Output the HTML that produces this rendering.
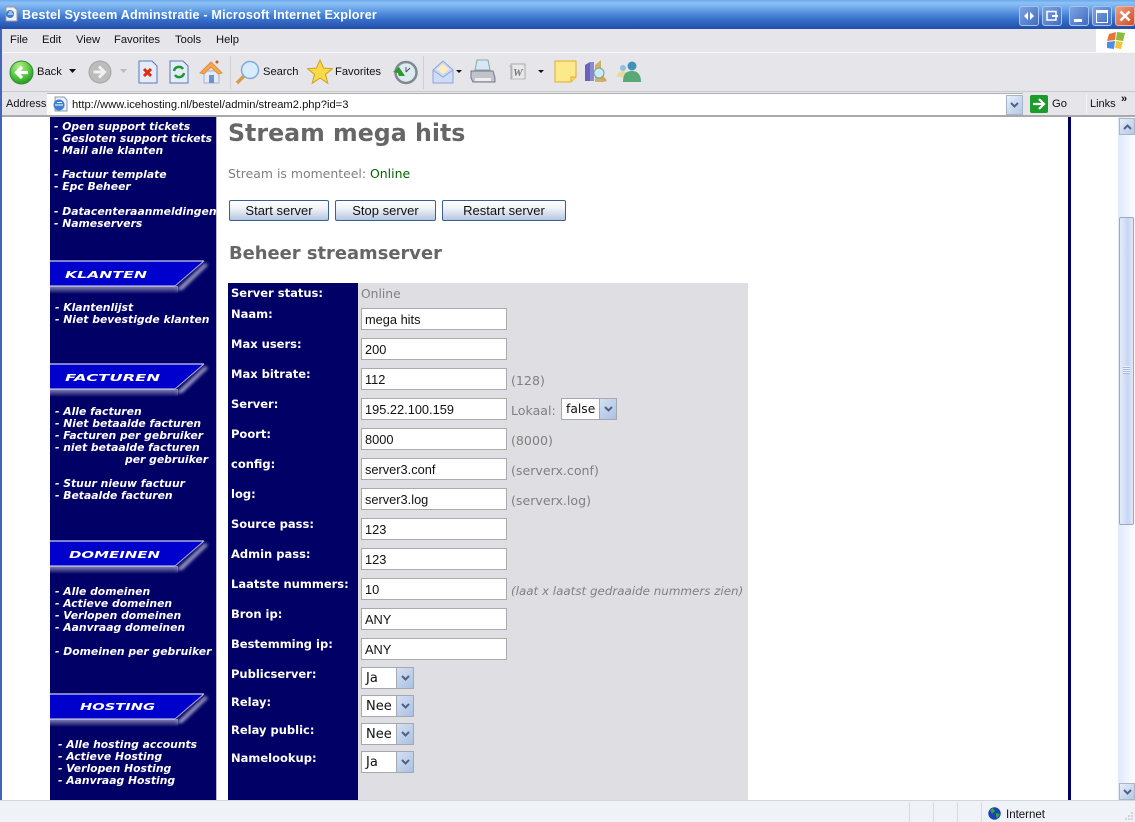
<!DOCTYPE html>
<html><head><meta charset="utf-8"><style>
html,body{margin:0;padding:0}
body{width:1135px;height:822px;position:relative;overflow:hidden;background:#fff;font-family:"Liberation Sans",sans-serif;color:#000}
div,span,svg{position:absolute;white-space:nowrap}
.t{font:11.2px/14px "Liberation Sans",sans-serif;color:#111}
.m{font:italic bold 10.8px/12px "DejaVu Sans",sans-serif;color:#fff;left:54px;margin-top:1px}
.bn{left:50px;width:167px;height:42px}
.l{font:bold 11.5px/14px "DejaVu Sans",sans-serif;color:#fff;left:231px;margin-top:-1px}
.i{left:361px;width:144px;height:20px;background:#fff;border:1px solid #aaa;font:12.8px/22px "Liberation Sans",sans-serif;color:#111;text-indent:3px}
.s{left:361px;height:20px;background:#fff;border:1px solid #a4a8b0;font:13px/22px "DejaVu Sans",sans-serif;color:#111}
.ar{top:0;right:0;width:16px;height:20px;background:linear-gradient(135deg,#d4e0f2,#aac0e2);border-left:1px solid #a4a8b0}
.h{font:12.6px/14px "DejaVu Sans",sans-serif;color:#808080}
.b{top:200px;height:19px;border:1px solid #3a5f95;border-radius:2px;background:linear-gradient(#fff,#eef2f8 40%,#b6c6df);font:13px/19px "Liberation Sans",sans-serif;color:#111;text-align:center}
.bt{font-family:"DejaVu Sans";font-weight:bold;font-style:italic;font-size:10px;fill:#fff}
.cap{top:6px;width:18px;height:18px;background:linear-gradient(135deg,#7da4e2,#3f6cc0);border:1px solid #a8c4ee;border-radius:3px}
</style></head><body>
<div style="left:0;top:0;width:1135px;height:29px;background:linear-gradient(#6aa8ee 0,#8dc2f4 3px,#6aa4e8 9px,#3a75d0 18px,#2350ac 28px)"></div>
<div style="left:22px;top:8px;font:bold 12.6px/15px 'Liberation Sans',sans-serif;color:#fff;letter-spacing:.17px">Bestel Systeem Adminstratie - Microsoft Internet Explorer</div>
<svg style="left:3px;top:6px" width="16" height="16" viewBox="0 0 16 16"><path d="M3 1h8l3 3v11H3z" fill="#f4f4f4" stroke="#999"/><circle cx="7" cy="8" r="4" fill="#3a7fd0"/><path d="M5 8h5M6 6h3" stroke="#fff"/></svg>
<div style="left:0;top:29px;width:1135px;height:23px;background:#e6e5ea;border-bottom:1px solid #f8f8f8"></div>
<div class="t" style="left:10px;top:33px">File</div><div class="t" style="left:42px;top:33px">Edit</div><div class="t" style="left:76px;top:33px">View</div><div class="t" style="left:114px;top:33px">Favorites</div><div class="t" style="left:175px;top:33px">Tools</div><div class="t" style="left:216px;top:33px">Help</div>
<div style="left:1096px;top:29px;width:39px;height:23px;background:#fff"></div>
<svg style="left:1102px;top:31px" width="28" height="20" viewBox="0 0 28 20"><path d="M7 3l7-2-1 8-8 1z" fill="#e8743a"/><path d="M15 1l8 1-2 8-7-1z" fill="#8dbb3a"/><path d="M5 11l8-1-1 8-7-1z" fill="#4a8fe0"/><path d="M14 10l7 1-2 7-6-1z" fill="#f3c53a"/></svg>
<div style="left:0;top:53px;width:1135px;height:38px;background:#e6e5ea;border-bottom:1px solid #c9c9cc"></div>
<!-- back -->
<svg style="left:9px;top:60px" width="25" height="25" viewBox="0 0 25 25"><defs><radialGradient id="g" cx=".4" cy=".25" r=".85"><stop offset="0" stop-color="#b8f08a"/><stop offset=".6" stop-color="#4cc03a"/><stop offset="1" stop-color="#1b8a1b"/></radialGradient></defs><circle cx="12.5" cy="12.5" r="11.5" fill="url(#g)" stroke="#2f8f2f"/><path d="M19 12.5H8M13 7l-5.500 5.500 5.500 5.500" fill="none" stroke="#fff" stroke-width="3.200"/></svg>
<div class="t" style="left:37px;top:65px">Back</div>
<svg style="left:69px;top:69px" width="8" height="5"><path d="M0 0h7L3.500 4z" fill="#111"/></svg>
<svg style="left:88px;top:60px" width="24" height="24" viewBox="0 0 24 24"><circle cx="12" cy="12" r="11" fill="#bcbcbc" stroke="#a4a4a4"/><path d="M5.500 12h10.500M11 6.500l5.500 5.500-5.500 5.500" fill="none" stroke="#f0f0f0" stroke-width="3"/></svg>
<svg style="left:120px;top:69px" width="8" height="5"><path d="M0 0h7L3.500 4z" fill="#bbb"/></svg>
<svg style="left:138px;top:60px" width="20" height="24" viewBox="0 0 20 24"><path d="M1 1h13l5 5v17H1z" fill="#e4ecfa" stroke="#5a78b8"/><path d="M6 9l7 7M13 9l-7 7" stroke="#e02a10" stroke-width="3"/></svg>
<svg style="left:169px;top:60px" width="20" height="24" viewBox="0 0 20 24"><path d="M1 1h13l5 5v17H1z" fill="#e4ecfa" stroke="#5a78b8"/><path d="M5 11a5 5 0 0 1 9-2M15 13a5 5 0 0 1-9 2" fill="none" stroke="#1c9a30" stroke-width="2.500"/></svg>
<svg style="left:199px;top:59px" width="25" height="26" viewBox="0 0 25 26"><path d="M5 12v12h15V12z" fill="#e4eaf8" stroke="#a8b4cc"/><path d="M1 14L12 3l11 11-4 1-7-7-7 7z" fill="#f4a650" stroke="#e09040"/><rect x="10" y="16" width="5" height="8" fill="#6a94d0"/><circle cx="18" cy="3" r="1.500" fill="#d05030"/></svg>
<div style="left:230px;top:56px;width:1px;height:33px;background:#cfcfd4"></div>
<svg style="left:235px;top:60px" width="26" height="25" viewBox="0 0 26 25"><path d="M2 23l8-8" stroke="#d99a4a" stroke-width="3.500"/><circle cx="15" cy="10" r="8.500" fill="#d8ecfb" stroke="#7faad6" stroke-width="1.500"/></svg>
<div class="t" style="left:263px;top:65px">Search</div>
<svg style="left:307px;top:59px" width="26" height="26" viewBox="0 0 26 26"><path d="M13 1l3.500 8 9 .7-7 5.600 2.300 9L13 19l-7.800 5.300 2.300-9-7-5.600 9-.7z" fill="#fbd94a" stroke="#c9a520"/></svg>
<div class="t" style="left:335px;top:65px">Favorites</div>
<svg style="left:392px;top:60px" width="26" height="25" viewBox="0 0 26 25"><circle cx="14" cy="12.500" r="10.500" fill="#dfeaf0" stroke="#7f8a90" stroke-width="2.500"/><path d="M14 12l4-4M14 12v-5" stroke="#456"/><path d="M1 12l6-5 6 9H7a8 8 0 0 1-1-3z" fill="#2b9a2b"/></svg>
<div style="left:423px;top:56px;width:1px;height:33px;background:#cfcfd4"></div>
<svg style="left:432px;top:60px" width="24" height="24" viewBox="0 0 24 24"><path d="M1 10L11 1l10 9v13H1z" fill="#cfdcf6" stroke="#8ea4d8"/><path d="M5 9l6-5 6 5-6 5z" fill="#fdeebc"/><path d="M1 10l10 7 10-7" fill="none" stroke="#8ea4d8"/></svg>
<svg style="left:456px;top:70px" width="7" height="4"><path d="M0 0h6L3 3z" fill="#111"/></svg>
<svg style="left:470px;top:59px" width="26" height="26" viewBox="0 0 26 26"><path d="M7 1h11l2 10H5z" fill="#d9e6f5" stroke="#8aa"/><path d="M1 12h22l2 7v4H3l-2-4z" fill="#c0c3ca" stroke="#778"/><path d="M5 19h16v3H5z" fill="#eee"/></svg>
<svg style="left:508px;top:63px" width="18" height="18" viewBox="0 0 18 18"><path d="M3 1h14v15H3z" fill="#e8e8e8" stroke="#aaa"/><path d="M1 3h3v13h13" fill="none" stroke="#bbb"/><text x="5" y="13" font-family="Liberation Serif" font-style="italic" font-weight="bold" font-size="11" fill="#777">W</text></svg>
<svg style="left:538px;top:70px" width="7" height="4"><path d="M0 0h6L3 3z" fill="#111"/></svg>
<svg style="left:554px;top:60px" width="23" height="23" viewBox="0 0 23 23"><path d="M1 1h21v16l-5 5H1z" fill="#fde98a" stroke="#e0ae2a"/><path d="M17 22v-5h5" fill="#f8d860" stroke="#e0ae2a"/></svg>
<svg style="left:584px;top:59px" width="24" height="25" viewBox="0 0 24 25"><path d="M1 6l5-3v19H1z" fill="#6a62b8"/><path d="M6 3h4v19H6z" fill="#8d86d0"/><path d="M11 6l6-5v10h3v12H11z" fill="#cdb06a"/><circle cx="15" cy="14" r="5" fill="#cfe7fa" stroke="#6a8"/><path d="M18 18l4 4" stroke="#d9a04a" stroke-width="2.500"/></svg>
<svg style="left:616px;top:60px" width="26" height="23" viewBox="0 0 26 23"><circle cx="7" cy="8" r="3" fill="#8fbfe4"/><path d="M1 17c0-4 3-6 6-6s4 2 4 6z" fill="#e4dc98"/><circle cx="16" cy="6" r="4.500" fill="#3f93b8"/><path d="M7 22c0-8 3-11 9-11s9 4 9 11z" fill="#5aa878"/></svg>
<!-- address -->
<div style="left:0;top:92px;width:1135px;height:23px;background:#e6e5ea"></div>
<div class="t" style="left:6px;top:97px;font-size:11px">Address</div>
<div style="left:47px;top:93px;width:976px;height:21px;background:#fff;border-top:1px solid #b0b0b4"></div>
<svg style="left:52px;top:96px" width="16" height="16" viewBox="0 0 16 16"><path d="M3 1h9l3 3v11H3z" fill="#eef" stroke="#89a"/><circle cx="7" cy="9" r="5.500" fill="#3a7fd0"/><path d="M3 9h8M5 6.500h5" stroke="#fff"/></svg>
<div class="t" style="left:72px;top:98px">http://www.icehosting.nl/bestel/admin/stream2.php?id=3</div>
<div style="left:1006px;top:95px;width:15px;height:18px;background:linear-gradient(135deg,#e6eefa,#b4c8e6);border:1px solid #a8b4c8"><svg style="left:3px;top:6px" width="9" height="6"><path d="M1 1l3.500 3.500L8 1" fill="none" stroke="#4d6185" stroke-width="2"/></svg></div>
<div style="left:1030px;top:95px;width:18px;height:18px;background:#1c9a2a;border-radius:2px"><svg style="left:2px;top:3px" width="14" height="12"><path d="M1 6h10M7 1l5 5-5 5" fill="none" stroke="#fff" stroke-width="2.200"/></svg></div>
<div class="t" style="left:1052px;top:97px">Go</div>
<div style="left:1086px;top:94px;width:1px;height:20px;background:#f5f5f5"></div>
<div class="t" style="left:1090px;top:97px;font-size:11px">Links</div>
<div style="left:1121px;top:93px;font:bold 11px/13px 'Liberation Sans',sans-serif;color:#111">»</div>
<div style="left:0;top:115px;width:1135px;height:2px;background:#a9a9ad"></div>
<!-- window borders -->
<div style="left:0;top:29px;width:2px;height:793px;background:#3f66bc"></div>
<!-- caption buttons -->
<div class="cap" style="left:1019px"><svg style="left:3px;top:4px" width="12" height="10"><path d="M5 1L1 5l4 4zM7 1l4 4-4 4z" fill="#fff"/></svg></div>
<div class="cap" style="left:1042px"><svg style="left:3px;top:3px" width="13" height="12"><path d="M1 1.500h9V10H1z" fill="none" stroke="#fff" stroke-width="1.500"/><path d="M6 6h6" stroke="#fff" stroke-width="2"/></svg></div>
<div class="cap" style="left:1069px"><div style="left:4px;top:12px;width:8px;height:3px;background:#fff"></div></div>
<div class="cap" style="left:1092px"><div style="left:3px;top:3px;width:10px;height:9px;border:1px solid #fff;border-top:3px solid #fff"></div></div>
<div class="cap" style="left:1115px;background:linear-gradient(135deg,#f0a080,#cf4a28);border-color:#e8b8a8"><svg style="left:3px;top:3px" width="12" height="12"><path d="M1.500 1.500l9 9M10.500 1.500l-9 9" stroke="#fff" stroke-width="2.600"/></svg></div>
<!-- page -->
<div style="left:50px;top:117px;width:166px;height:683px;background:#000066;border-right:1px solid #b8b8d0"></div>
<div style="left:1068px;top:117px;width:3px;height:683px;background:#000066"></div>
<div class="m" style="top:120px">- Open support tickets</div>
<div class="m" style="top:132px">- Gesloten support tickets</div>
<div class="m" style="top:144px">- Mail alle klanten</div>
<div class="m" style="top:168px">- Factuur template</div>
<div class="m" style="top:180px">- Epc Beheer</div>
<div class="m" style="top:205px">- Datacenteraanmeldingen</div>
<div class="m" style="top:217px">- Nameservers</div>
<div class="m" style="top:301px;left:55px">- Klantenlijst</div>
<div class="m" style="top:313px;left:55px">- Niet bevestigde klanten</div>
<div class="m" style="top:405px;left:55px">- Alle facturen</div>
<div class="m" style="top:417px;left:55px">- Niet betaalde facturen</div>
<div class="m" style="top:429px;left:55px">- Facturen per gebruiker</div>
<div class="m" style="top:441px;left:55px">- niet betaalde facturen</div>
<div class="m" style="top:453px;left:125px">per gebruiker</div>
<div class="m" style="top:477px;left:55px">- Stuur nieuw factuur</div>
<div class="m" style="top:489px;left:55px">- Betaalde facturen</div>
<div class="m" style="top:585px;left:55px">- Alle domeinen</div>
<div class="m" style="top:597px;left:55px">- Actieve domeinen</div>
<div class="m" style="top:609px;left:55px">- Verlopen domeinen</div>
<div class="m" style="top:621px;left:55px">- Aanvraag domeinen</div>
<div class="m" style="top:645px;left:55px">- Domeinen per gebruiker</div>
<div class="m" style="top:738px;left:58px">- Alle hosting accounts</div>
<div class="m" style="top:750px;left:58px">- Actieve Hosting</div>
<div class="m" style="top:762px;left:58px">- Verlopen Hosting</div>
<div class="m" style="top:774px;left:58px">- Aanvraag Hosting</div>
<!-- banners -->
<svg width="0" height="0" style="left:0;top:0"><defs><linearGradient id="sh" x1="0" y1="0" x2="0" y2="1"><stop offset="0" stop-color="#8a8ab4"/><stop offset="1" stop-color="#000066"/></linearGradient><filter id="bl" x="-30%" y="-30%" width="160%" height="160%"><feGaussianBlur stdDeviation="1.500"/></filter></defs></svg>
<svg class="bn" style="top:260px" viewBox="0 0 167 42"><path d="M0 26h128v8H0z" fill="url(#sh)"/><path d="M126 30L155 3l3 2-26 25z" fill="#a4a4c8" filter="url(#bl)"/><path d="M0 1h154l-29 25H0z" fill="#0000cc"/><path d="M0 1h154" stroke="#fff"/><path d="M0 26h125" stroke="#e8e8f4"/><path d="M125 26l29-25" stroke="#b0b0d4"/><text class="bt" x="15" y="18" textLength="82" lengthAdjust="spacingAndGlyphs">KLANTEN</text></svg>
<svg class="bn" style="top:363px" viewBox="0 0 167 42"><path d="M0 26h128v8H0z" fill="url(#sh)"/><path d="M126 30L155 3l3 2-26 25z" fill="#a4a4c8" filter="url(#bl)"/><path d="M0 1h154l-29 25H0z" fill="#0000cc"/><path d="M0 1h154" stroke="#fff"/><path d="M0 26h125" stroke="#e8e8f4"/><path d="M125 26l29-25" stroke="#b0b0d4"/><text class="bt" x="15" y="18" textLength="95" lengthAdjust="spacingAndGlyphs">FACTUREN</text></svg>
<svg class="bn" style="top:540px" viewBox="0 0 167 42"><path d="M0 26h128v8H0z" fill="url(#sh)"/><path d="M126 30L155 3l3 2-26 25z" fill="#a4a4c8" filter="url(#bl)"/><path d="M0 1h154l-29 25H0z" fill="#0000cc"/><path d="M0 1h154" stroke="#fff"/><path d="M0 26h125" stroke="#e8e8f4"/><path d="M125 26l29-25" stroke="#b0b0d4"/><text class="bt" x="19" y="18" textLength="91" lengthAdjust="spacingAndGlyphs">DOMEINEN</text></svg>
<svg class="bn" style="top:693px" viewBox="0 0 167 42"><path d="M0 26h128v8H0z" fill="url(#sh)"/><path d="M126 30L155 3l3 2-26 25z" fill="#a4a4c8" filter="url(#bl)"/><path d="M0 1h154l-29 25H0z" fill="#0000cc"/><path d="M0 1h154" stroke="#fff"/><path d="M0 26h125" stroke="#e8e8f4"/><path d="M125 26l29-25" stroke="#b0b0d4"/><text class="bt" x="30" y="17" textLength="75" lengthAdjust="spacingAndGlyphs">HOSTING</text></svg>
<!-- content -->
<div style="left:228px;top:117px;font:bold 23.7px/32px 'DejaVu Sans',sans-serif;color:#666">Stream mega hits</div>
<div style="left:228px;top:166px;font:12.45px/15px 'DejaVu Sans',sans-serif;color:#808080">Stream is momenteel: <span style="position:static;color:#006400">Online</span></div>
<div class="b" style="left:229px;width:98px">Start server</div>
<div class="b" style="left:335px;width:99px">Stop server</div>
<div class="b" style="left:442px;width:122px">Restart server</div>
<div style="left:229px;top:243px;font:bold 17.9px/21px 'DejaVu Sans',sans-serif;color:#666">Beheer streamserver</div>
<div style="left:228px;top:283px;width:130px;height:517px;background:#000066"></div>
<div style="left:358px;top:283px;width:390px;height:517px;background:#dfdfe3"></div>
<div class="l" style="top:287px">Server status:</div>
<div class="h" style="left:361px;top:287px;font-size:12.3px">Online</div>
<div class="l" style="top:308px">Naam:</div><div class="i" style="top:308px">mega hits</div>
<div class="l" style="top:338px">Max users:</div><div class="i" style="top:338px">200</div>
<div class="l" style="top:368px">Max bitrate:</div><div class="i" style="top:368px">112</div><div class="h" style="left:511px;top:374px">(128)</div>
<div class="l" style="top:398px">Server:</div><div class="i" style="top:398px">195.22.100.159</div><div class="h" style="left:511px;top:404px">Lokaal:</div>
<div class="s" style="left:561px;top:398px;width:54px;text-indent:4px;font-size:12.3px;line-height:21px">false<div class="ar"><svg style="left:4px;top:7px" width="9" height="6"><path d="M1 1l3.500 3.500L8 1" fill="none" stroke="#4d6185" stroke-width="2"/></svg></div></div>
<div class="l" style="top:428px">Poort:</div><div class="i" style="top:428px">8000</div><div class="h" style="left:511px;top:434px">(8000)</div>
<div class="l" style="top:458px">config:</div><div class="i" style="top:458px">server3.conf</div><div class="h" style="left:511px;top:464px">(serverx.conf)</div>
<div class="l" style="top:488px">log:</div><div class="i" style="top:488px">server3.log</div><div class="h" style="left:511px;top:494px">(serverx.log)</div>
<div class="l" style="top:518px">Source pass:</div><div class="i" style="top:518px">123</div>
<div class="l" style="top:548px">Admin pass:</div><div class="i" style="top:548px">123</div>
<div class="l" style="top:578px">Laatste nummers:</div><div class="i" style="top:578px">10</div><div class="h" style="left:511px;top:584px;font-style:italic;font-size:11.9px">(laat x laatst gedraaide nummers zien)</div>
<div class="l" style="top:608px">Bron ip:</div><div class="i" style="top:608px">ANY</div>
<div class="l" style="top:638px">Bestemming ip:</div><div class="i" style="top:638px">ANY</div>
<div class="l" style="top:668px">Publicserver:</div><div class="s" style="top:667px;width:51px;text-indent:4px;font-size:13px">Ja<div class="ar"><svg style="left:4px;top:7px" width="9" height="6"><path d="M1 1l3.500 3.500L8 1" fill="none" stroke="#4d6185" stroke-width="2"/></svg></div></div>
<div class="l" style="top:696px">Relay:</div><div class="s" style="top:695px;width:51px;text-indent:4px;font-size:13px">Nee<div class="ar"><svg style="left:4px;top:7px" width="9" height="6"><path d="M1 1l3.500 3.500L8 1" fill="none" stroke="#4d6185" stroke-width="2"/></svg></div></div>
<div class="l" style="top:724px">Relay public:</div><div class="s" style="top:723px;width:51px;text-indent:4px;font-size:13px">Nee<div class="ar"><svg style="left:4px;top:7px" width="9" height="6"><path d="M1 1l3.500 3.500L8 1" fill="none" stroke="#4d6185" stroke-width="2"/></svg></div></div>
<div class="l" style="top:752px">Namelookup:</div><div class="s" style="top:751px;width:51px;text-indent:4px;font-size:13px">Ja<div class="ar"><svg style="left:4px;top:7px" width="9" height="6"><path d="M1 1l3.500 3.500L8 1" fill="none" stroke="#4d6185" stroke-width="2"/></svg></div></div>
<!-- scrollbar -->
<div style="left:1118px;top:117px;width:17px;height:683px;background:linear-gradient(90deg,#dfe9fa,#fbfcff)"></div>
<div style="left:1119px;top:118px;width:14px;height:15px;background:linear-gradient(135deg,#e6eefa,#b4c8e6);border:1px solid #a8b4c8"><svg style="left:3px;top:5px" width="9" height="6"><path d="M1 5l3.500-3.500L8 5" fill="none" stroke="#4d6185" stroke-width="2"/></svg></div>
<div style="left:1119px;top:217px;width:13px;height:306px;background:linear-gradient(90deg,#e4ecfb,#c6d6f2 60%,#e0e9fa);border:1px solid #97a8c4;border-radius:2px"></div>
<div style="left:1123px;top:366px;width:7px;height:8px;background:repeating-linear-gradient(#eef3fc 0 1px,#a4b8da 1px 2px)"></div>
<div style="left:1119px;top:783px;width:14px;height:15px;background:linear-gradient(135deg,#e6eefa,#b4c8e6);border:1px solid #a8b4c8"><svg style="left:3px;top:5px" width="9" height="6"><path d="M1 1l3.500 3.500L8 1" fill="none" stroke="#4d6185" stroke-width="2"/></svg></div>
<!-- status -->
<div style="left:0;top:800px;width:1135px;height:22px;background:#eff2f7;border-top:1px solid #d4d6da;box-sizing:border-box"></div>
<div style="left:909px;top:802px;width:1px;height:20px;background:#d8d8dc"></div>
<div style="left:933px;top:802px;width:1px;height:20px;background:#d8d8dc"></div>
<div style="left:957px;top:802px;width:1px;height:20px;background:#d8d8dc"></div>
<div style="left:981px;top:802px;width:1px;height:20px;background:#d8d8dc"></div>
<svg style="left:988px;top:807px" width="13" height="13" viewBox="0 0 13 13"><circle cx="6.500" cy="6.500" r="6.200" fill="#1a3fc0"/><path d="M2 3l3-2 2 3-3 3zM8 6l4 1-3 5-1-3z" fill="#2faa2a"/></svg>
<div class="t" style="left:1006px;top:808px;font-size:11.500px">Internet</div>
<svg style="left:1124px;top:811px" width="10" height="10"><path d="M7 1h2v2H7zM4 4h2v2H4zM7 4h2v2H7zM1 7h2v2H1zM4 7h2v2H4zM7 7h2v2H7z" fill="#d0d4dc"/></svg>
</body></html>
